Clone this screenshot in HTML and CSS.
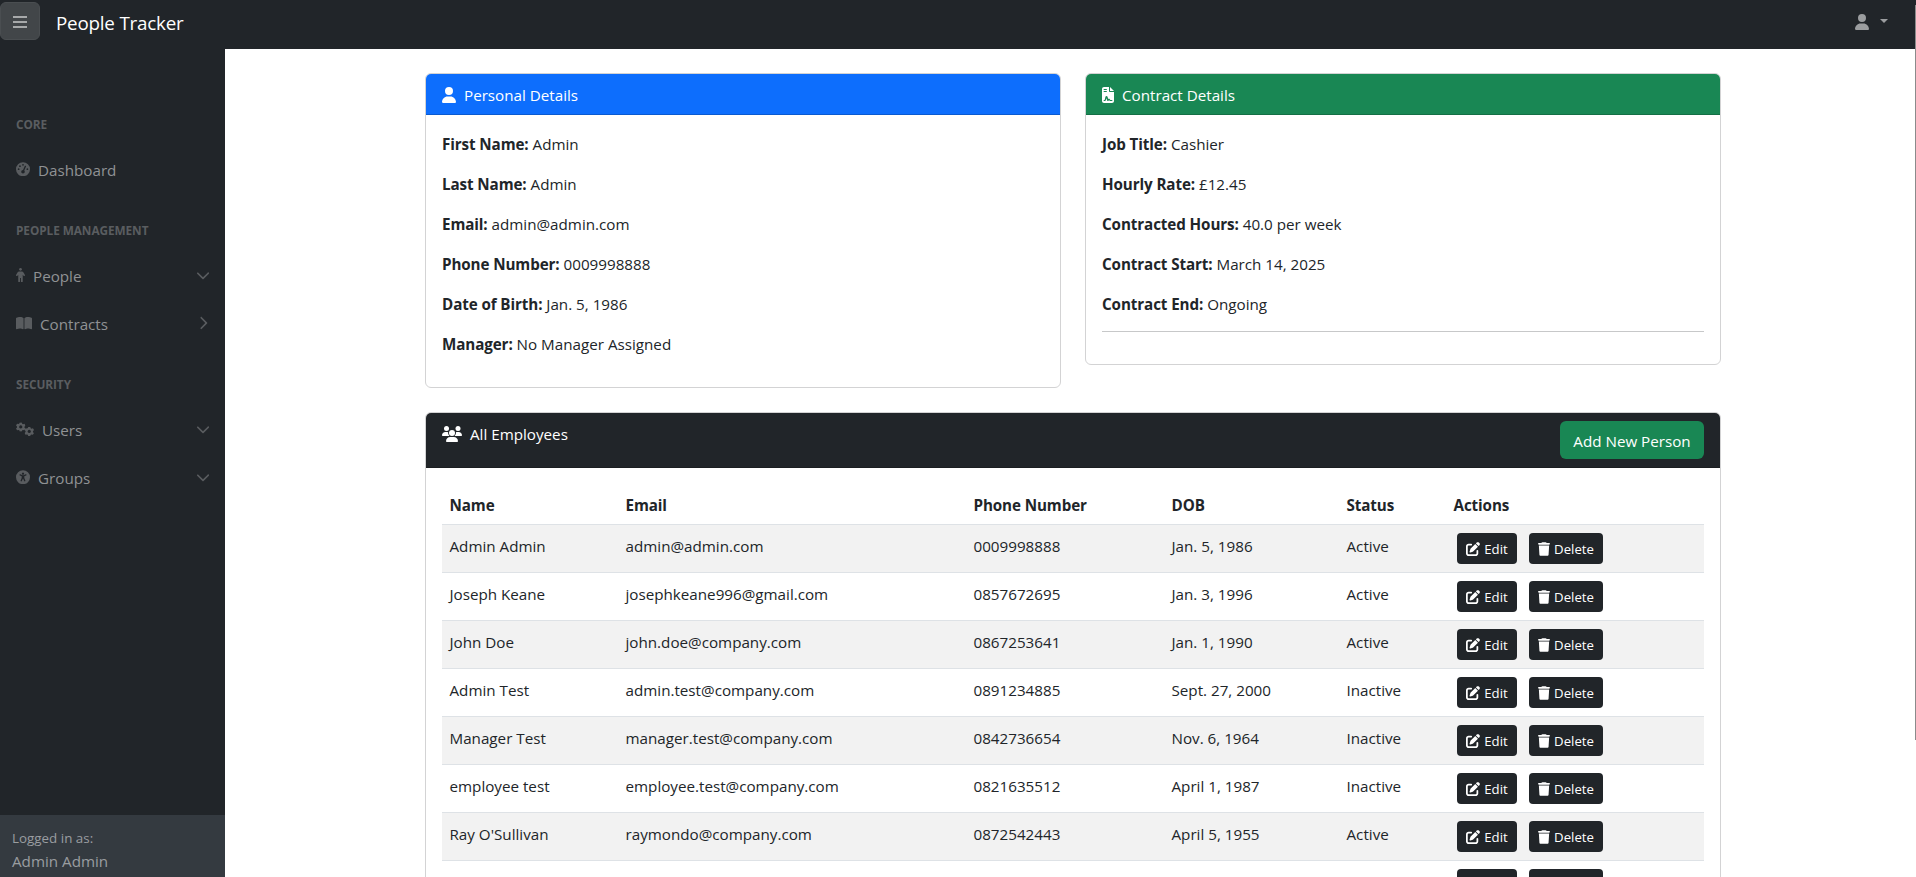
FILE: index.html
```html
<!DOCTYPE html>
<html lang="en">
<head>
<meta charset="utf-8">
<title>People Tracker</title>
<link rel="stylesheet" href="styles.css">
</head>
<body>
<svg class="defs" width="0" height="0">
  <symbol id="user" viewBox="0 0 448 512"><path d="M224 256A128 128 0 1 0 224 0a128 128 0 1 0 0 256zm-45.700 48C79.800 304 0 383.800 0 482.300 0 498.700 13.300 512 29.700 512H418.300c16.400 0 29.700-13.300 29.700-29.700C448 383.800 368.200 304 269.700 304H178.300z"/></symbol>
  <symbol id="down" viewBox="0 0 512 512"><path d="M233.400 406.600c12.500 12.500 32.800 12.500 45.300 0l192-192c12.500-12.500 12.500-32.800 0-45.300s-32.800-12.500-45.300 0L256 338.700 86.600 169.400c-12.500-12.500-32.800-12.500-45.300 0s-12.500 32.800 0 45.300l192 192z"/></symbol>
  <symbol id="edit" viewBox="0 0 512 512"><path d="M471.600 21.700c-21.900-21.900-57.300-21.900-79.200 0L362.300 51.700l97.900 97.900 30.100-30.100c21.900-21.900 21.900-57.300 0-79.200L471.600 21.700zm-299.200 220c-6.100 6.100-10.800 13.600-13.500 21.900l-29.600 88.800c-2.900 8.600-.6 18.100 5.800 24.600s15.900 8.700 24.600 5.800l88.800-29.600c8.200-2.700 15.700-7.400 21.900-13.500L437.700 172.300 339.700 74.300 172.400 241.700zM96 64C43 64 0 107 0 160V416c0 53 43 96 96 96H352c53 0 96-43 96-96V320c0-17.700-14.300-32-32-32s-32 14.300-32 32v96c0 17.700-14.300 32-32 32H96c-17.700 0-32-14.300-32-32V160c0-17.700 14.300-32 32-32h96c17.700 0 32-14.300 32-32s-14.300-32-32-32H96z"/></symbol>
  <symbol id="trash" viewBox="0 0 448 512"><path d="M135.200 17.700L128 32H32C14.300 32 0 46.300 0 64S14.300 96 32 96H416c17.700 0 32-14.300 32-32s-14.300-32-32-32H320l-7.200-14.300C307.400 6.800 296.300 0 284.200 0H163.800c-12.100 0-23.200 6.800-28.600 17.700zM416 128H32L53.200 467c1.600 25.300 22.600 45 47.900 45H346.900c25.300 0 46.300-19.700 47.900-45L416 128z"/></symbol>
  <symbol id="gear" viewBox="-50 -50 100 100"><path fill-rule="evenodd" d="M-11-48H11L15-33 24-28 39-33 50-14 39-3V7L49 18 38 36 23 32 14 37 10 49H-11L-15 36-24 31-39 35-50 17-39 6V-4L-50-15-39-34-24-30-15-35ZM0-17a17 17 0 1 0 .1 0Z"/></symbol>
</svg>

<header class="topbar">
  <button class="toggle" aria-label="Toggle navigation"><svg viewBox="0 0 14 12"><path d="M0 0h14v2H0zM0 5h14v2H0zM0 10h14v2H0z"/></svg></button>
  <a class="brand">People Tracker</a>
  <div class="account"><svg class="account-icon"><use href="#user"/></svg><span class="caret"></span></div>
</header>

<div class="layout">
  <nav class="sidebar">
    <div class="menu">
      <div class="heading">CORE</div>
      <a class="link"><svg class="ic w14" viewBox="0 0 512 512"><path fill-rule="evenodd" d="M0 256a256 256 0 1 1 512 0A256 256 0 1 1 0 256zM288 96a32 32 0 1 0-64 0 32 32 0 1 0 64 0zM256 416c35.300 0 64-28.700 64-64 0-17.400-6.900-33.100-18.100-44.600L366 161.700c5.300-12.100-.2-26.300-12.300-31.600s-26.300.2-31.600 12.300L257.900 288H256c-35.300 0-64 28.700-64 64s28.700 64 64 64zM176 144a32 32 0 1 0-64 0 32 32 0 1 0 64 0zM96 288a32 32 0 1 0 0-64 32 32 0 1 0 0 64zm352-32a32 32 0 1 0-64 0 32 32 0 1 0 64 0z"/></svg><span>Dashboard</span></a>
      <div class="heading">PEOPLE MANAGEMENT</div>
      <a class="link"><svg class="ic w9" viewBox="0 0 320 512"><circle cx="160" cy="48" r="48"/><path d="M112 128h96c30 0 48 12 64 38l42 72c9 15 4 35-11 44s-35 4-44-11l-19-31v240c0 18-14 32-32 32s-32-14-32-32V352h-32v128c0 18-14 32-32 32s-32-14-32-32V240l-19 31c-9 15-29 20-44 11s-20-29-11-44l42-72c16-26 34-38 64-38z"/></svg><span>People</span><svg class="arrow"><use href="#down"/></svg></a>
      <a class="link"><svg class="ic w16" viewBox="0 0 576 512"><path d="M249.600 471.500c10.800 3.800 22.400-4.100 22.400-15.500V78.600c0-4.200-1.600-8.400-5-11C247.400 52 202.400 32 144 32 93.500 32 46.300 45.300 18.100 56.100 6.800 60.500 0 71.700 0 83.800V454.100c0 11.900 12.800 20.200 24.100 16.500C55.600 460.100 105.500 448 144 448c33.900 0 79 14 105.600 23.500zm76.800 0C353 462 398.100 448 432 448c38.500 0 88.400 12.100 119.900 22.600 11.300 3.800 24.100-4.600 24.100-16.500V83.800c0-12.100-6.800-23.300-18.100-27.600C529.700 45.300 482.500 32 432 32c-58.400 0-103.400 20-123 35.600-3.300 2.600-5 6.800-5 11V456c0 11.400 11.700 19.300 22.400 15.500z"/></svg><span>Contracts</span><svg class="arrow right"><use href="#down"/></svg></a>
      <div class="heading">SECURITY</div>
      <a class="link"><svg class="ic w18" viewBox="0 0 18 14"><use href="#gear" width="9.500" height="9.500" y="0"/><use href="#gear" width="9.500" height="9.500" x="8.500" y="4.500"/></svg><span>Users</span><svg class="arrow"><use href="#down"/></svg></a>
      <a class="link"><svg class="ic w14" viewBox="0 0 512 512"><path fill-rule="evenodd" d="M0 256a256 256 0 1 1 512 0A256 256 0 1 1 0 256zM256 88a40 40 0 1 0 .1 0zM161 151c-12-5-26 0-32 12s0 26 12 32l67 29v63l-39 88c-5 12 0 27 12 32s26 0 32-12l37-83h12l37 83c5 12 19 18 31 12s18-20 12-32l-38-88v-63l67-29c12-5 18-20 12-32s-20-17-32-12l-60 26c-22 10-48 10-70 0z"/></svg><span>Groups</span><svg class="arrow"><use href="#down"/></svg></a>
    </div>
    <div class="foot"><div class="small">Logged in as:</div>Admin Admin</div>
  </nav>

  <main class="content">
    <div class="details">
      <section class="card">
        <h2 class="card-head blue"><svg class="hic w14"><use href="#user"/></svg>Personal Details</h2>
        <div class="card-body">
          <p><b>First Name:</b> Admin</p>
          <p><b>Last Name:</b> Admin</p>
          <p><b>Email:</b> admin@admin.com</p>
          <p><b>Phone Number:</b> 0009998888</p>
          <p><b>Date of Birth:</b> Jan. 5, 1986</p>
          <p><b>Manager:</b> No Manager Assigned</p>
        </div>
      </section>
      <section class="card">
        <h2 class="card-head green"><svg class="hic w12" viewBox="0 0 384 512"><path fill-rule="evenodd" d="M64 0C28.700 0 0 28.700 0 64V448c0 35.300 28.700 64 64 64H320c35.300 0 64-28.700 64-64V160H256c-17.700 0-32-14.300-32-32V0H64zM256 0V128H384L256 0zM64 64h80c20 0 20 32 0 32H64c-20 0-20-32 0-32zm0 64h80c20 0 20 32 0 32H64c-20 0-20-32 0-32zM144 288c15 0 28 9 33 23l23 73c12-16 40-16 52 4l14 28h54c22 0 22 32 0 32h-70l-24-34c-9 24-26 37-38 34h-16l-28-90-20 66c-6 17-20 24-36 24H64c-20 0-20-32 0-32h16c4 0 6-3 7-6l23-99c5-14 18-23 34-23z"/></svg>Contract Details</h2>
        <div class="card-body">
          <p><b>Job Title:</b> Cashier</p>
          <p><b>Hourly Rate:</b> £12.45</p>
          <p><b>Contracted Hours:</b> 40.0 per week</p>
          <p><b>Contract Start:</b> March 14, 2025</p>
          <p><b>Contract End:</b> Ongoing</p>
          <hr>
        </div>
      </section>
    </div>

    <section class="card">
      <div class="card-head dark"><h2 class="title"><svg class="hic w20" viewBox="0 0 640 512"><circle cx="144" cy="80" r="80"/><circle cx="512" cy="80" r="80"/><path d="M0 299c0-59 48-107 107-107h43c16 0 31 4 45 10a128 128 0 0 0 41 118H21c-12 0-21-9-21-21zM405 320h-1a128 128 0 0 0 42-118c14-6 29-10 45-10h43c59 0 106 48 106 107 0 12-9 21-21 21H405z"/><circle cx="320" cy="224" r="96"/><path d="M128 485c0-73 60-133 133-133h118c73 0 133 60 133 133 0 15-12 27-27 27H155c-15 0-27-12-27-27z"/></svg>All Employees</h2><button class="add">Add New Person</button></div>
      <div class="card-body">
        <table class="people">
          <colgroup><col class="c1"><col class="c2"><col class="c3"><col class="c4"><col class="c5"><col></colgroup>
          <thead><tr><th>Name</th><th>Email</th><th>Phone Number</th><th>DOB</th><th>Status</th><th>Actions</th></tr></thead>
          <tbody id="rows"></tbody>
        </table>
      </div>
    </section>
  </main>
</div>
<span class="scrollbar"></span>
<script src="people.js"></script>
</body>
</html>
```
FILE: styles.css
```css
* { box-sizing: border-box; }
html, body { height: 100%; }
body { margin: 0; overflow: hidden; display: flex; flex-direction: column; background: #fff; color: #212529; font: 15.200px/24px "Open Sans", "Noto Sans", sans-serif; }
button { font: inherit; border: 0; }
svg { fill: currentColor; }
h2, p { margin: 0; font: inherit; }
b, th { font-weight: 700; letter-spacing: -0.1px; }
.defs { display: block; position: absolute; }

.topbar { display: flex; align-items: flex-start; flex: none; height: 49px; background: #212529; }
.toggle { display: flex; align-items: center; justify-content: center; width: 40px; height: 38px; margin-top: 2px; padding: 0; border: 1px solid #4a4e51; border-radius: 6px; background: #424649; color: #a7a9aa; }
.toggle svg { width: 14px; height: 12px; margin-top: 2px; }
.brand { margin: 8px 0 0 16px; color: #fff; font-size: 18.8px; line-height: 30px; letter-spacing: -0.2px; }
.account { display: flex; align-items: center; gap: 11px; margin: 14px 28px 0 auto; color: #9b9d9f; }
.account-icon { width: 14px; height: 16px; }
.caret { border: 4px solid transparent; border-top-color: currentColor; border-bottom: 0; margin-top: -2px; }

.layout { display: flex; flex: 1; min-height: 0; }
.sidebar { display: flex; flex-direction: column; width: 225px; flex: none; background: #212529; }
.menu { flex: 1; padding-top: 39px; }
.heading { padding: 28px 16px 14px; font-size: 11.800px; font-weight: 700; line-height: 16px; color: #5a5d60; letter-spacing: -0.06px; }
.link { display: flex; align-items: center; height: 48px; padding: 0 15px 0 16px; color: #909294; }
.ic { height: 14.400px; margin: -2px 8px 0 0; color: #595c5f; }
.w9 { width: 9px; } .w12 { width: 12px; } .w14 { width: 14px; } .w16 { width: 16px; } .w18 { width: 18px; } .w20 { width: 20px; }
.arrow { width: 14px; height: 16px; margin: -3px 0 0 auto; color: #595c5f; }
.right { transform: rotate(-90deg); }
.foot { height: 62px; padding: 13px 12px 0; background: #343a40; color: #9a9da0; }
.small { font-size: 13.400px; line-height: 21px; }

.content { flex: 1; overflow: hidden; padding: 24px 195px 0 200px; }
.details { display: grid; grid-template-columns: 1fr 1fr; gap: 24px; align-items: start; margin-bottom: 24px; }
.card { border: 1px solid #d3d3d4; border-radius: 6px; overflow: hidden; }
.card-head { display: flex; align-items: center; padding: 9px 16px 7px; border-bottom: 1px solid rgba(0, 0, 0, 0.175); color: #fff; }
.blue { background: #0d6efd; }
.green { background: #198754; }
.dark { align-items: flex-start; justify-content: space-between; padding: 8px 16px; background: #212529; }
.title { display: flex; align-items: center; padding-top: 1px; }
.hic { height: 16px; margin: 0 8px 0 0; }
.card-body { padding: 16px; }
.card-body p { height: 24px; margin-bottom: 16px; line-height: 26px; }
.card-body hr { margin: 0 0 16px; border: 0; border-top: 1px solid #c7c8c9; }
.add { height: 38px; width: 144px; padding: 2px 0 0; border-radius: 6px; background: #198754; color: #fff; }

.people { width: 100%; table-layout: fixed; border-collapse: separate; border-spacing: 0; }
.c1 { width: 176px; } .c2 { width: 348px; } .c3 { width: 198px; } .c4 { width: 175px; } .c5 { width: 107px; }
.people th, .people td { padding: 9px 8px 7px 7.500px; border-bottom: 1px solid #dee2e6; text-align: left; vertical-align: top; white-space: nowrap; }
.people td { height: 48px; }
.people td:last-child { padding: 8px; }
.people tbody tr:nth-child(odd) { background: #f2f2f2; }
.actions { display: flex; gap: 12px; padding-left: 3px; }
.btn { display: flex; align-items: center; justify-content: center; gap: 4px; width: 60px; height: 31px; padding: 1px 0 0; border-radius: 4px; background: #212529; color: #fff; font-size: 13.200px; line-height: 21px; }
.btn.wide { width: 74px; }
.btn svg { width: 14px; height: 14px; }
.btn.wide svg { width: 12px; }
.scrollbar { position: absolute; right: 0; top: 5px; width: 1px; height: 735px; background: #8b8b8b; }
```
FILE: people.js
```javascript
const people = [
  ["Admin Admin", "admin@admin.com", "0009998888", "Jan. 5, 1986", "Active"],
  ["Joseph Keane", "josephkeane996@gmail.com", "0857672695", "Jan. 3, 1996", "Active"],
  ["John Doe", "john.doe@company.com", "0867253641", "Jan. 1, 1990", "Active"],
  ["Admin Test", "admin.test@company.com", "0891234885", "Sept. 27, 2000", "Inactive"],
  ["Manager Test", "manager.test@company.com", "0842736654", "Nov. 6, 1964", "Inactive"],
  ["employee test", "employee.test@company.com", "0821635512", "April 1, 1987", "Inactive"],
  ["Ray O'Sullivan", "raymondo@company.com", "0872542443", "April 5, 1955", "Active"],
  ["Ben Arnold", "ben.arnold@company.com", "0871234567", "May 2, 1991", "Inactive"]
];
const actions = `<td><div class="actions"><button class="btn"><svg><use href="#edit"/></svg>Edit</button><button class="btn wide"><svg><use href="#trash"/></svg>Delete</button></div></td>`;
document.getElementById("rows").innerHTML = people
  .map(p => `<tr>${p.map(v => `<td>${v}</td>`).join("")}${actions}</tr>`)
  .join("");
```
